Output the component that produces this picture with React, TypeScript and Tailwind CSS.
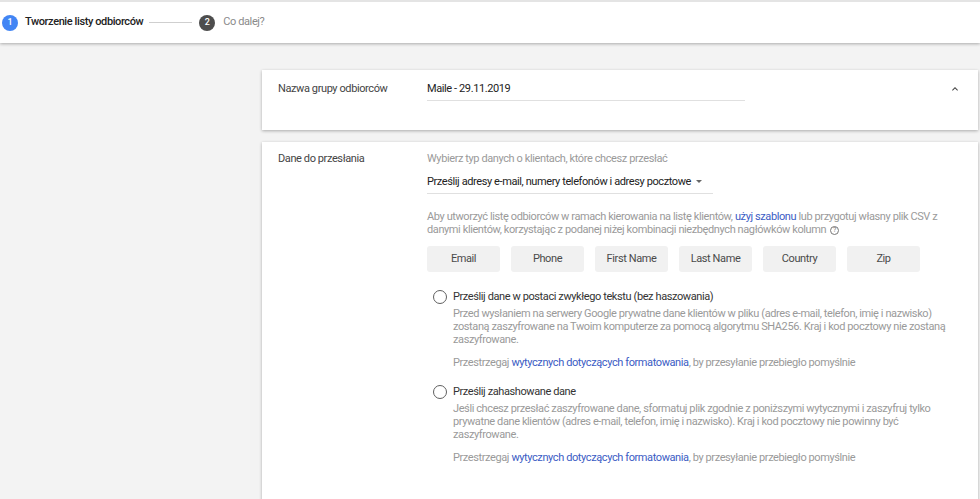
import React from "react";

const Chip = ({ label }: { label: string }) => (
  <div className="w-[73px] h-[26px] rounded-[3px] bg-[#f1f1f1] flex items-center justify-center text-[#4a4a4a]">
    {label}
  </div>
);

const Radio = ({ title, desc }: { title: string; desc: string }) => (
  <div className="flex">
    <div className="w-[20px] pt-[1px] flex justify-start ml-[6px]">
      <div className="w-[14px] h-[14px] rounded-full border-[1.5px] border-[#5f5f5f]" />
    </div>
    <div className="flex-1">
      <div className="text-[#333] leading-[16px]">{title}</div>
      <div className="text-[#9a9a9a] leading-[13px] mt-[2px] pr-[4px]">{desc}</div>
      <div className="text-[#9a9a9a] leading-[13px] mt-[10px]">
        Przestrzegaj <span className="text-[#3b5cc4]">wytycznych dotyczących formatowania</span>, by przesyłanie przebiegło pomyślnie
      </div>
    </div>
  </div>
);

export default function App() {
  return (
    <div
      className="w-[980px] h-[499px] overflow-hidden bg-[#f3f3f3] text-[11px] tracking-[-0.4px]"
      style={{ fontFamily: "Roboto, 'Liberation Sans', sans-serif" }}
    >
      <div className="h-[43px] bg-white flex items-center pl-[2px] shadow-[0_1px_3px_rgba(0,0,0,0.3)] relative z-10 border-t-[2px] border-[#e4e4e4]">
        <div className="w-[16px] h-[16px] rounded-full bg-[#4285f4] text-white text-[9px] tracking-normal font-medium flex items-center justify-center">1</div>
        <div className="ml-[7px] text-[#222] font-medium">Tworzenie listy odbiorców</div>
        <div className="ml-[6px] w-[43px] h-px bg-[#cfcfcf]" />
        <div className="ml-[7px] w-[16px] h-[16px] rounded-full bg-[#4d4d4d] text-white text-[9px] tracking-normal font-medium flex items-center justify-center">2</div>
        <div className="ml-[8px] text-[#8a8a8a]">Co dalej?</div>
      </div>

      <div className="pl-[262px] pr-[2px] pt-[27px] flex flex-col gap-[12px]">
        <div className="bg-white h-[60px] shadow-[0_1px_3px_rgba(0,0,0,0.3)] flex pt-[12px] pl-[16px]">
          <div className="w-[149px] text-[#444] leading-[13px]">Nazwa grupy odbiorców</div>
          <div className="flex-1">
            <div className="w-[318px] border-b border-[#e0e0e0] pb-[5px] text-[#222] leading-[13px]">Maile - 29.11.2019</div>
          </div>
          <div className="w-[14px] mr-[16px] flex justify-center pt-[1px]">
            <svg width="12" height="12" viewBox="0 0 24 24">
              <path d="M7.4 15.4 12 10.8l4.6 4.6L18 14l-6-6-6 6z" fill="#444" />
            </svg>
          </div>
        </div>

        <div className="bg-white h-[400px] shadow-[0_1px_3px_rgba(0,0,0,0.3)] flex pt-[10px] pl-[16px] pr-[14px]">
          <div className="w-[149px] text-[#444] leading-[13px]">Dane do przesłania</div>
          <div className="flex-1">
            <div className="text-[#9a9a9a] leading-[13px]">Wybierz typ danych o klientach, które chcesz przesłać</div>
            <div className="mt-[10px] w-[286px] border-b border-[#e0e0e0] pb-[5px] flex items-center text-[#222] leading-[13px]">
              <span>Prześlij adresy e-mail, numery telefonów i adresy pocztowe</span>
              <svg width="6" height="4" viewBox="0 0 6 4" className="ml-[5px]">
                <path d="M0 0h6L3 3z" fill="#666" />
              </svg>
            </div>
            <div className="mt-[16px] text-[#9a9a9a] leading-[13px] pr-[14px]">
              Aby utworzyć listę odbiorców w ramach kierowania na listę klientów, <span className="text-[#3b5cc4]">użyj szablonu</span> lub przygotuj własny plik CSV z danymi klientów, korzystając z podanej niżej kombinacji niezbędnych nagłówków kolumn
              <span className="inline-flex ml-[4px] w-[9px] h-[9px] rounded-full border border-[#777] text-[7px] leading-none items-center justify-center text-[#777] align-middle tracking-normal">?</span>
            </div>
            <div className="mt-[10px] flex gap-[11px]">
              {["Email", "Phone", "First Name", "Last Name", "Country", "Zip"].map((l) => (
                <Chip key={l} label={l} />
              ))}
            </div>
            <div className="mt-[17px] flex flex-col gap-[15px]">
              <Radio
                title="Prześlij dane w postaci zwykłego tekstu (bez haszowania)"
                desc="Przed wysłaniem na serwery Google prywatne dane klientów w pliku (adres e-mail, telefon, imię i nazwisko) zostaną zaszyfrowane na Twoim komputerze za pomocą algorytmu SHA256. Kraj i kod pocztowy nie zostaną zaszyfrowane."
              />
              <Radio
                title="Prześlij zahashowane dane"
                desc="Jeśli chcesz przesłać zaszyfrowane dane, sformatuj plik zgodnie z poniższymi wytycznymi i zaszyfruj tylko prywatne dane klientów (adres e-mail, telefon, imię i nazwisko). Kraj i kod pocztowy nie powinny być zaszyfrowane."
              />
            </div>
          </div>
        </div>
      </div>
    </div>
  );
}
